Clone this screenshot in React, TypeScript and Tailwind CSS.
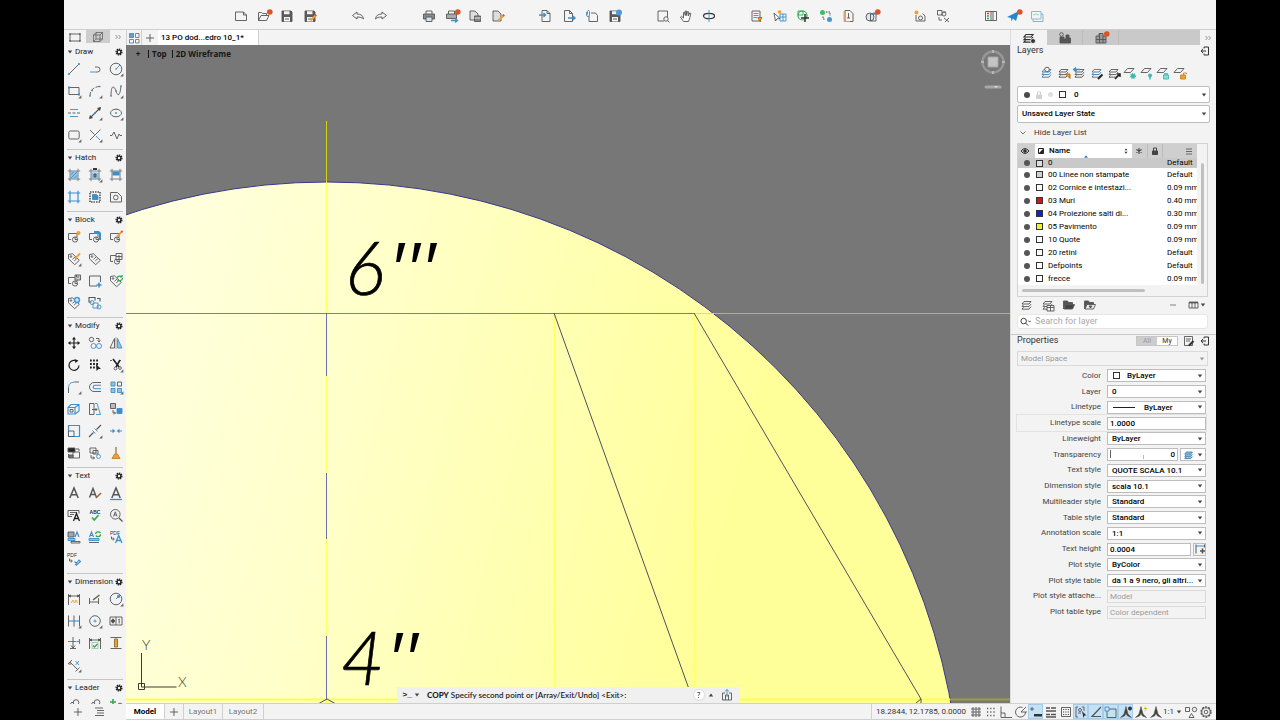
import type { ReactNode } from "react";
import clsx from "clsx";

const BLUE = "#3d8fc9";
const LIGHT = "#8fc4e6";
const GREEN = "#2fa84f";
const ORANGE = "#f0a030";

type Tool = { label: string; icon: ReactNode; flyout?: boolean; alert?: boolean; on?: boolean };

const Glyph = ({ children, flyout, alert }: { children: ReactNode; flyout?: boolean; alert?: boolean }) => (
  <svg viewBox="0 0 14 14" className="h-3.5 w-3.5 shrink-0 overflow-visible" fill="none" stroke="#555" strokeWidth="0.9">
    {children}
    {flyout && <path d="M14.4 11.2v3.2h-3.2z" fill="#666" stroke="none" />}
    {alert && <circle cx="12.8" cy="3" r="2.8" fill="#dc5326" stroke="none" />}
  </svg>
);

/* Shared shapes */
const page = <path d="M3 1.5h5l3 3v8H3zM8 1.5v3h3" />;
const pageWide = <path d="M1.5 3h8l3 3v5.5h-11zM9.5 3v3h3" />;
const block = (
  <>
    <path d="M4 9.5H1.5v-6H10v4" />
    <circle cx="8" cy="9.5" r="2.6" />
    <path d="M8 7v2.5h2.6" />
  </>
);
const tag = (
  <>
    <path d="M1.5 2.5l4-.7 6.8 6.5-4.6 4.4L1.5 6.8z" />
    <circle cx="4" cy="4.5" r=".8" />
    <path d="M5.5 7.3L8 5M7.2 9l2.6-2.4" />
  </>
);
const hatchFrame = <path d="M3 .8v12.4M11 .8v12.4M.8 3h12.4M.8 11h12.4" stroke="#6b7780" />;
const floppy = (
  <>
    <path d="M2 2h9l1 1v9.500H2z" fill="#5a5a5a" />
    <path d="M4 2.300h5.500v3H4zM4 8h6v4.500H4z" fill="#f3f3f3" stroke="none" />
    <path d="M5 10h4" />
  </>
);
const pencil = (
  <>
    <path d="M7.500 11.500L12.500 6.500" stroke={ORANGE} strokeWidth="2" />
    <path d="M12 7l1.200-1.200" stroke="#dc5326" strokeWidth="2" />
  </>
);
const stack = <path d="M4 3.500h7l-2 2.500H2zM3.500 6.800L2 8.600h7l2-2.500M3.500 9.400L2 11.200h7l2-2.500" />;
const flat = <path d="M4.500 2.500H11L7.500 6.500H1z" />;
const letterA = <path d="M2.800 12L7 2l4.200 10M4.300 8.700h5.400" strokeWidth="1.500" />;
const smallA = <path d="M6.500 13l3.200-7.500 3.200 7.500M7.600 10.500H12" stroke={BLUE} strokeWidth="1.300" />;
const dimEnds = <path d="M1.500 2v11M12.500 2v11M1.500 4h11M1.500 4l2-1v2zM12.500 4l-2-1v2z" />;
const annotate = (
  <path d="M7 1.500l2 7.500 3.500 3.500L8.500 11 7 8.500 5.500 11l-4 1.500L5 9z" fill="#3f3f3f" strokeWidth=".6" />
);

const draw: Tool[] = [
  { label: "Line", icon: <><path d="M2 12L12 2" /><circle cx="2" cy="12" r=".7" fill={BLUE} stroke={BLUE} /><circle cx="12" cy="2" r=".7" fill={BLUE} stroke={BLUE} /></> },
  { label: "Polyline", icon: <><path d="M2 10h6" stroke={BLUE} /><path d="M8 10h1.500a2.500 2.500 0 0 0 0-5H7" /></> },
  { label: "Circle", flyout: true, icon: <><circle cx="7" cy="7" r="5.800" /><path d="M7 7l4-4M6 7h2" stroke={BLUE} /></> },
  { label: "Rectangle", flyout: true, icon: <><path d="M2 3.500h10v7H2z" /><path d="M1 3.500h2M11 10.500h2" stroke={BLUE} strokeWidth="2" /></> },
  { label: "Arc", flyout: true, icon: <><path d="M2 12C2 6 6 2.500 12 2.500" strokeDasharray="4 1.500" /><path d="M1.300 12h1.500M3.500 6.500h1.500M11 2.500h1.500" stroke={BLUE} strokeWidth="1.500" /></> },
  { label: "Spline", flyout: true, icon: <><path d="M2 12C2 1 5 1 7 7s4 5 5-5" /><path d="M1.300 12h1.500M6.300 7h1.500M11.300 2h1.500" stroke={BLUE} strokeWidth="1.500" /></> },
  { label: "Construction line", icon: <><path d="M3 3.500h8M3 10.500h8" stroke={BLUE} /><path d="M1 7h3M5.500 7h3M10 7h3" /></> },
  { label: "Ray", flyout: true, icon: <><path d="M2 12L12 2" strokeWidth="1.100" /><path d="M1 13l1-4 3 3zM13 1l-4 1 3 3z" fill="#444" stroke="none" /><path d="M6.300 7h1.500" stroke={BLUE} strokeWidth="1.500" /></> },
  { label: "Ellipse", flyout: true, icon: <><ellipse cx="7" cy="7" rx="5.500" ry="3.800" /><path d="M6 7h2M7 6v2M1 7h1M12 7h1M7 3h.8" stroke={BLUE} /></> },
  { label: "Rounded rectangle", flyout: true, icon: <rect x="1.800" y="3" width="10.400" height="8" rx="1.500" /> },
  { label: "Break at point", flyout: true, icon: <><path d="M2 2l4.500 4.500M2 12L12.500 1.500" /><path d="M8 8l4 4" stroke={BLUE} /></> },
  { label: "Break line", icon: <path d="M1 7.500h2l2-3.500 3 7 2-5 1 1.500h2" /> },
];

const hatch: Tool[] = [
  { label: "Hatch", icon: <><path d="M3.500 3.500h7v7h-7z" fill={LIGHT} stroke="none" /><path d="M4 10l6-6M4 6.500L6.500 4M7.500 10L10 7.500" stroke={BLUE} />{hatchFrame}</> },
  { label: "Gradient", flyout: true, icon: <><path d="M3.500 4.500h7v6h-7z" fill={LIGHT} stroke="none" /><path d="M6 6h2v3H6z" fill={BLUE} />{hatchFrame}<path d="M5 1h4" strokeWidth="1.800" stroke="#222" /></> },
  { label: "Hatch pattern", icon: <><path d="M3.500 3.500h7v4h-7z" fill={BLUE} stroke="none" />{hatchFrame}</> },
  { label: "Boundary", icon: <path d="M3 .8v12.4M11 .8v12.4M.8 3h12.4M.8 11h12.4" stroke={BLUE} strokeWidth="1.200" /> },
  { label: "Edit hatch", icon: <><path d="M2 2h10v10H2z" strokeDasharray="1.500 1" strokeWidth="1.600" /><path d="M4.500 4.500h4l1.500 1.500v3.500H4.500z" fill={BLUE} stroke={BLUE} /></> },
  { label: "Region", icon: <><path d="M1.500 2.500h7l4 4v5.500h-11z" /><circle cx="6.800" cy="7.500" r="2.300" /></> },
];

const blocks: Tool[] = [
  { label: "Create block", icon: <>{block}<circle cx="11.500" cy="3" r="2" fill={ORANGE} stroke="none" /></> },
  { label: "Insert block", icon: <>{block}<path d="M6 1h5l2 2v7h-2V4H6z" fill={BLUE} stroke="none" /></> },
  { label: "Edit block", icon: <>{block}<path d="M8 6.500l5-5" stroke={ORANGE} strokeWidth="1.800" /><path d="M12.300 2.200l1.200-1.200" stroke="#dc5326" strokeWidth="1.800" /></> },
  { label: "Edit attribute", flyout: true, icon: <>{tag}<path d="M8 6.500l5-5" stroke={ORANGE} strokeWidth="1.800" /></> },
  { label: "Define attribute", icon: tag },
  { label: "Block manager", icon: <>{block}<path d="M7 1.500h6v6H7zM7 4.500h6M10 3v4" fill="#f3f3f3" /></> },
  { label: "Write block", icon: <>{block}<path d="M8 1h5.500v5H8zM9.500 1v2h2.500" fill="#ccc" /></> },
  { label: "Set base point", icon: <><path d="M9 12H1.500V2h11v6" /><path d="M11 8.500v5M8.500 11h5" stroke={BLUE} strokeWidth="1.600" /></> },
  { label: "Synchronize attributes", icon: <>{tag}<path d="M8 4a3 3 0 0 1 5-1M13.500 4a3 3 0 0 1-5 2M13 1v2h-2" stroke={GREEN} strokeWidth="1.200" /></> },
  { label: "Move attribute", icon: <>{tag}<circle cx="10" cy="4" r="3.200" fill="#4b9bd5" stroke="none" /><path d="M10 2v4M8 4h4" stroke="#fff" /></> },
  { label: "Replace block", icon: <><path d="M3.500 6H1V1.500h6v3M9 2.500h3v3" strokeWidth="1.100" /><path d="M5 7h5v5H5z" stroke={BLUE} /><circle cx="11" cy="11" r="2" stroke={BLUE} /><circle cx="4" cy="6.500" r="2" stroke={BLUE} /></> },
];

const modify: Tool[] = [
  { label: "Move", icon: <><path d="M7 2v10M2 7h10" stroke="#222" strokeWidth="1.200" /><path d="M7 .8L9 3.500H5zM7 13.200L5 10.500h4zM.8 7l2.700-2v4zM13.200 7l-2.700 2V5z" fill="#222" stroke="none" /></> },
  { label: "Copy", icon: <><circle cx="3.500" cy="3.500" r="2.200" /><path d="M8 2.500h3v3M9.500 4.500l1.500 1.500 1.500-1.500" /><circle cx="5.500" cy="10" r="2.500" stroke={BLUE} /><circle cx="11" cy="10" r="2.500" stroke={BLUE} /></> },
  { label: "Mirror", icon: <><path d="M5.500 2.500v9.500H1z" /><path d="M8.500 2.500V12H13z" stroke={BLUE} fill={LIGHT} /><path d="M7 1v12" strokeWidth=".5" /></> },
  { label: "Rotate", icon: <><path d="M9.500 3A5 5 0 1 0 12 7.500" stroke="#222" strokeWidth="1.200" /><path d="M7.500 1l4 1.500-3 2.500z" fill="#222" stroke="none" /></> },
  { label: "Stretch", icon: <><path d="M2 2.500h9M2 6h9M2 9.500h5" strokeWidth="1.800" strokeDasharray="1.800 1.300" stroke="#222" /><path d="M8 6l5 5H10.500L8.500 13z" fill="#222" stroke="none" /></> },
  { label: "Trim", flyout: true, icon: <><path d="M1 2.500h4.500M10 2.500h3" strokeDasharray="2 1" /><path d="M4 1l6 8M11 2L7 9" strokeWidth="1.600" stroke="#222" /><circle cx="6.500" cy="10.500" r="1.400" /><circle cx="11" cy="10" r="1.400" /></> },
  { label: "Fillet", flyout: true, icon: <><path d="M1.500 13V8" /><path d="M1.500 8c0-4 2-5.500 6-6" stroke={BLUE} /><path d="M7.500 2H12" /></> },
  { label: "Offset", icon: <><path d="M13 2.500H6a4.500 4.500 0 0 0 0 9h7" /><path d="M13 5.200H7a1.800 1.800 0 0 0 0 3.600h6" stroke={BLUE} strokeWidth="1.100" /></> },
  { label: "Array", flyout: true, icon: <><path d="M2 2h4v4H2zM2 8.500h4v4H2zM8.500 8.500h4v4h-4z" fill={LIGHT} stroke={BLUE} /><path d="M8.500 2h4v4h-4z" /></> },
  { label: "3D copy", icon: <><path d="M1 5.500h7V12H1zM1 5.500L4 2.500h8V9L8 12M8 5.500l4-3" stroke={BLUE} strokeWidth="1.100" /><path d="M3 7.500h3V10H3z" /></> },
  { label: "Lengthen", icon: <><path d="M1.500 1.500H6v11H1.500zM4 7.500h5M7.500 6L9 7.500 7.500 9" /><path d="M7 1.500h2l3.500 11H8" stroke={BLUE} /></> },
  { label: "Paste as block", icon: <><path d="M1.500 1.500h5v5h-5z" fill="#bbb" /><path d="M4 8v3h2.500M5 9.500L6.500 11 5 12.500" /><path d="M8 6.500h5v5H8z" fill={BLUE} stroke={BLUE} /></> },
  { label: "Scale", icon: <><path d="M1.500 1.500h11v11h-11z" stroke={BLUE} strokeWidth="1.200" /><path d="M1.500 7h5.500v5.500H1.500z" fill="#f3f3f3" /></> },
  { label: "Break", flyout: true, icon: <><path d="M1 13l4.500-4.500M8.500 5.500L13 1" strokeWidth="1.100" /><path d="M4.500 6.500l3 3M6.500 4.500l3 3" stroke={BLUE} /></> },
  { label: "Join", icon: <><path d="M1 7h4M9 7h4" stroke={BLUE} strokeWidth="1.200" /><path d="M3.500 4.800L6.300 7 3.500 9.200zM10.500 4.800L7.700 7l2.800 2.200z" fill={BLUE} stroke="none" /></> },
  { label: "Draw order", icon: <><path d="M1 2h7v4H1z" fill="#222" /><path d="M6 6h6.500v6H6zM1.500 8v3.500H5M9 3h3v2" /><path d="M2 9h4v3H2z" fill="#777" /></> },
  { label: "Change space", icon: <><path d="M2 2h6v5H2zM5 4.500h5V8H5zM3 9v3h3.500M5 10.500L6.500 12 5 13.500" /><circle cx="10.500" cy="10.500" r="2" stroke={BLUE} /></> },
  { label: "Purge", icon: <><path d="M7 1v7" stroke="#8a5a20" strokeWidth="1.100" /><path d="M5.500 8h3l2.500 4.500H3z" fill={ORANGE} stroke="#c78220" /></> },
];

const textTools: Tool[] = [
  { label: "Multiline text", icon: letterA },
  { label: "Edit text", icon: <><path d="M1.500 11.500L5 2.500l3.500 9M2.800 8.500h4.500" strokeWidth="1.400" /><path d="M8 12l5-5" stroke="#8a6a30" strokeWidth="1.400" /></> },
  { label: "Text style", icon: <>{letterA}<path d="M1 13.500h12" stroke={BLUE} strokeWidth="1.300" /></> },
  { label: "Text to front", icon: <><path d="M1 2.500h11v3M1 2.500v6h4M3 4.500h7M3 6.500h4" /><path d="M6.500 13l3-7.500 3 7.500M7.700 10.500h3.700" strokeWidth="1.300" stroke="#222" /></> },
  { label: "Spelling", icon: <><text x="7" y="5.500" textAnchor="middle" fontSize="5" fill="#333" stroke="none" fontFamily="Liberation Sans" fontWeight="700">ABC</text><path d="M4 9.500l2.300 2.500L10.500 7" stroke={GREEN} strokeWidth="1.600" /></> },
  { label: "Find text", icon: <><circle cx="6.300" cy="6.300" r="4.800" /><path d="M10 10l3.500 3.500" strokeWidth="1.300" /><path d="M4.500 8.500l1.800-4.700 1.800 4.700M5 7h2.500" /></> },
  { label: "Align text", icon: <><path d="M1 2h6v5H1z" fill="#9ab" /><path d="M8 7l2-5 2 5" stroke={BLUE} strokeWidth="1.200" /><path d="M1 8.500h7v2H1z" stroke={BLUE} fill={LIGHT} /><path d="M4 11.500h9v1.500H4z" /></> },
  { label: "Update text", icon: <><path d="M1.500 7l2-5 2 5M2.300 5.500h2.500" stroke={BLUE} strokeWidth="1.200" /><path d="M7.500 4a2.800 2.800 0 0 1 5-1M12.800 4.500a2.800 2.800 0 0 1-5 1" stroke={GREEN} strokeWidth="1.300" /><path d="M1 8.500h10v2H1z" stroke={BLUE} fill={LIGHT} /><path d="M1 12.500h10" /></> },
  { label: "PDF text", icon: <><text x="6" y="4.500" textAnchor="middle" fontSize="5" fill="#333" stroke="none" fontFamily="Liberation Sans">PDF</text><path d="M2.500 6.500V9h2.500M4 7.500L5.300 9 4 10.500" />{smallA}</> },
  { label: "PDF import", icon: <><text x="5" y="4.500" textAnchor="middle" fontSize="5" fill="#333" stroke="none" fontFamily="Liberation Sans">PDF</text><path d="M2.500 6.500V9h2.500M4 7.500L5.300 9 4 10.500" /><path d="M8 13l4-5 1.500 1.500L9 13.500M7.500 9.500l2 2" stroke={BLUE} strokeWidth="1.100" /></> },
];

const dimension: Tool[] = [
  { label: "Dimension", icon: <>{dimEnds}<path d="M4 11l2-3 1.500 3L9 8l1.500 3" stroke={ORANGE} /></> },
  { label: "Quick dimension", icon: <><path d="M1.500 6v6M10.500 6v6M1.500 10h9" /><path d="M5 8l6.500-5" stroke="#6d5a30" strokeWidth="1.400" /></> },
  { label: "Radius", flyout: true, icon: <><circle cx="7" cy="7" r="5.800" /><path d="M7 7l3.500-3.500M10.800 3.200L8 4l2 2z" stroke={BLUE} fill={BLUE} /></> },
  { label: "Continue", flyout: true, icon: <><path d="M1.500 1.500v11M7 1.500v11M12.500 1.500v11" /><path d="M1.500 7h11" stroke={BLUE} strokeWidth="1.100" /></> },
  { label: "Center mark", flyout: true, icon: <><circle cx="7" cy="7" r="5.300" /><path d="M5.500 7h3M7 5.500v3" stroke={BLUE} /></> },
  { label: "Tolerance", icon: <><path d="M1 3h12v8H1zM7 3v8" /><circle cx="4" cy="7" r="1.500" fill="#333" /><path d="M2 7h4M4 4.500v5M10.200 5v4.500M9.300 5.800l1-.8" /></> },
  { label: "Dimension space", icon: <><path d="M1 5.500h8M12.500 3v5M9.500 5.500h3" stroke={BLUE} strokeWidth="1.100" /><path d="M6 1v11M4 9.500l2 2.500 2-2.500M3 12.500h6" /></> },
  { label: "Inspect", icon: <>{dimEnds}<path d="M4 6.500h6v6H4z" stroke="#9cc9a8" /><path d="M5 9.500l1.500 1.500L9.500 8" stroke={GREEN} strokeWidth="1.300" /></> },
  { label: "Dimension update", icon: <><path d="M1.500 1.500h11M1.500 12.500h11" /><path d="M5.500 3h3v8h-3z" fill={ORANGE} stroke="#8a6a30" /></> },
  { label: "Oblique", flyout: true, icon: <><path d="M1 6l4-4M3 4l8 8M8.500 13.500l4-4M1.500 6h3" /><path d="M8.500 3l3.500 4M12 3L8.500 7" stroke={BLUE} /></> },
];

const leader: Tool[] = [
  { label: "Multileader", icon: <><circle cx="9" cy="4.500" r="2.800" /><path d="M1.500 9.500l3-5h2" /></> },
  { label: "Leader edit", icon: <><circle cx="9" cy="4.500" r="2.800" /><path d="M1.500 9.500l3-5h2" /></> },
  { label: "Add leader", icon: <><path d="M4 1v6M1 4h6" stroke={GREEN} strokeWidth="1.600" /><circle cx="11" cy="7.500" r="2.300" /></> },
];

const palettes = [
  { title: "Draw", tools: draw },
  { title: "Hatch", tools: hatch },
  { title: "Block", tools: blocks },
  { title: "Modify", tools: modify },
  { title: "Text", tools: textTools },
  { title: "Dimension", tools: dimension },
  { title: "Leader", tools: leader },
];

const printer = (
  <>
    <path d="M4 5V2h6v3" />
    <path d="M1.500 5h11v5h-11z" fill="#8a8a8a" />
    <path d="M4 8h6v4.500H4z" fill="#cfe3f2" />
  </>
);

const toolbar: Tool[][] = [
  [
    { label: "New", icon: pageWide },
    { label: "Open", alert: true, icon: <path d="M1.500 11.500V3.500h3l1 1h4v2M1.500 11.500l2.500-5h8l-2.500 5z" /> },
    { label: "Save", icon: floppy },
    { label: "Save as", icon: <>{floppy}{pencil}</> },
  ],
  [
    { label: "Undo", icon: <path d="M1.500 6.500L6 3v2c4 0 6 1.500 6.500 5C11 8.500 9 8 6 8v2z" /> },
    { label: "Redo", icon: <path d="M12.500 6.500L8 3v2c-4 0-6 1.500-6.500 5C3 8.500 5 8 8 8v2z" /> },
  ],
  [
    { label: "Print", icon: printer },
    { label: "Publish", alert: true, icon: <><path d="M3.500 5V2h6v3" /><path d="M1.500 5h10v4.500h-10z" fill="#aaa" /><path d="M6 11.500h6M10 9.500l2.500 2-2.500 2" stroke={BLUE} strokeWidth="1.300" /></> },
    { label: "Page setup", icon: <><path d="M2 2h5l3 3v6H2z" fill="#ddd" /><path d="M6.500 7h6v5.500h-6z" fill="#888" /><path d="M6.500 9h6" stroke="#eee" /></> },
    { label: "Edit page", icon: <><path d="M2 2h5l3 3v7H2z" fill="#ddd" />{pencil}</> },
  ],
  [
    { label: "Import", icon: <>{page}<path d="M0 6h6M4.500 4l2 2-2 2" stroke={BLUE} strokeWidth="1.400" /></> },
    { label: "Export", icon: <><path d="M2.500 1.500h5l3 3v8h-8zM7.500 1.500v3h3" /><path d="M6 9h7M11 7l2 2-2 2" stroke={BLUE} strokeWidth="1.400" /></> },
    { label: "Attach", icon: <><path d="M4 7v5.500h8.500V6.500L10.500 4H6" /><path d="M1.500 3v3a1.500 1.500 0 0 0 3 0V2.500a1 1 0 0 0-2 0v3" stroke={BLUE} /></> },
    { label: "Save to web", icon: <>{floppy}<circle cx="11" cy="3.500" r="3" fill="#4b9be0" stroke="none" /></> },
  ],
  [
    { label: "Zoom window", icon: <><path d="M8 12H2V2h9.500v6" /><circle cx="10" cy="10" r="2.200" /><path d="M11.500 11.500l2 2" /></> },
    { label: "Pan", icon: <path d="M4.500 12.500L1.500 8l1-.8L4.500 9V3.500l1-.3.8 3.300V2h1.200v4.500L8.500 2.500l1 .2-.3 4.300 1.600-3 1 .3-1 4.500-1.300 3.700z" fill="#fff" /> },
    { label: "Orbit", icon: <><ellipse cx="7" cy="7" rx="5.500" ry="2.700" stroke="#333" strokeWidth="1.200" /><path d="M7 1v12" stroke={BLUE} /></> },
  ],
  [
    { label: "Quick select", icon: <><path d="M2 2h8v10H2z" /><path d="M3.500 4.500h5M3.500 6.500h5M3.500 8.500h4" stroke={BLUE} /><path d="M8 8.500h4L10.500 11v2L9 11z" fill={ORANGE} stroke="#a86a10" /></> },
    { label: "Select similar", icon: <><path d="M7 5h6v7H7zM7 8h6M10 5v7" stroke={BLUE} /><path d="M1 4l6 5.500-3 .3L2.500 12z" fill="#fff" /><path d="M5 1.500h3v3H5z" fill={ORANGE} stroke="none" /></> },
    { label: "Drawing check", icon: <><circle cx="6.500" cy="6.500" r="4.500" stroke={GREEN} strokeWidth="1.200" /><path d="M2 2h5v4H2z" stroke={GREEN} /><path d="M9 5v8M5 9h8" strokeWidth="1.500" stroke="#333" /></> },
    { label: "Match", icon: <><circle cx="3.500" cy="3.500" r="2.500" fill="#3dbb66" stroke="none" /><circle cx="10.500" cy="10.500" r="2.500" fill="#4596cf" stroke="none" /><path d="M7 3h4v4M4 7.500v2.500h2" strokeDasharray="1.500 1" stroke="#333" /></> },
    { label: "Recover", icon: <><path d="M3 1.500h5l3 3v8H3z" /><path d="M2 2v10.500h6" stroke={ORANGE} /><path d="M6.500 4v5M5 9h3" /></> },
    { label: "Compare", alert: true, icon: <><circle cx="5" cy="8" r="4" fill="#d7e6f2" /><path d="M5.500 5H11v7H5.500z" /><path d="M8 4l4 1" stroke={BLUE} strokeWidth="1.400" /></> },
  ],
  [
    { label: "Content palette", icon: <><path d="M3 6v6h9V7L9.500 4.500" /><circle cx="7.500" cy="9" r="2" /><circle cx="3.500" cy="3.500" r="2" fill={ORANGE} stroke="none" /></> },
    { label: "Reference manager", icon: <><path d="M1.500 1.500H6V6H1.500zM7 3h3M3 8v3h3" /><circle cx="8" cy="5" r="2" /><path d="M8 9l5 4M13 9l-4 4" /></> },
  ],
  [
    { label: "Customize", icon: <><path d="M1.500 2.500h11v9h-11zM7 2.500v9M9 2.500v9" /><path d="M3 4.500h2" stroke="#d33" strokeWidth="1.500" /><path d="M3 7h2M3 9.500h2" stroke={GREEN} strokeWidth="1.500" /></> },
    { label: "Share", alert: true, icon: <path d="M0 8L12 2 9 12 6 9.500 4.500 12.500 4 9z" fill="#2486d0" stroke="none" /> },
    { label: "Shared views", icon: <><path d="M3 10v2.500h10V5h-2" stroke="#8ab" /><path d="M1.500 2.500h9.500V10H1.500z" stroke="#7bb6dc" /><path d="M3 6l3-1 3 1" stroke="#9cc" /></> },
  ],
];

const layerTools: Tool[] = [
  { label: "Layer properties", icon: <g stroke="#3a78a8">{stack}<circle cx="7" cy="3.500" r="2.300" fill="#f3f3f3" stroke="#555" /></g> },
  { label: "Layer isolate", icon: <>{stack}<path d="M8.500 8h4.500v4.500z" fill={ORANGE} stroke="#a86a10" /></> },
  { label: "Layer previous", icon: <>{stack}<path d="M1 3.500h6M3 1.500l-2.200 2L3 5.500" stroke={BLUE} strokeWidth="1.500" /></> },
  { label: "Make current", icon: <><g stroke="#3a78a8">{stack}</g><path d="M8 13l4.500-4.500" strokeWidth="1.800" stroke="#222" /></> },
  { label: "Match layer", icon: <>{stack}<path d="M8 13l4.500-4.500M10 8h3v3" strokeWidth="1.500" stroke="#222" /></> },
  { label: "Freeze", icon: <>{flat}<circle cx="10" cy="10" r="2.300" fill="#45b8ae" stroke="#45b8ae" strokeDasharray="1 .8" strokeWidth="1.500" /></> },
  { label: "Off", icon: <>{flat}<circle cx="10" cy="9.500" r="2" fill="#45b8ae" stroke="none" /><path d="M10 11v2.500" stroke="#45b8ae" strokeWidth="1.500" /></> },
  { label: "Lock", icon: <>{flat}<path d="M7.500 9h5v4h-5zM8.500 9V7.500h3V9" fill="#8fdcd4" stroke="#45b8ae" /></> },
  { label: "Unlock", icon: <>{flat}<path d="M7.500 9h5v4h-5z" fill={ORANGE} stroke="#c78220" /><path d="M10.500 9V7h3v1" stroke="#c78220" /></> },
];

const statusTools: Tool[] = [
  { label: "Grid", icon: <path d="M4 2v10M7 2v10M10 2v10M2 4h10M2 7h10M2 10h10" /> },
  { label: "Snap", icon: <path d="M3 3.500h9M3 7h9M3 10.500h9" strokeDasharray="1.200 2" strokeWidth="1.300" /> },
  { label: "Ortho", icon: <path d="M2 1.500v11h11M2 8h4v4.500" /> },
  { label: "Polar", icon: <><path d="M11.500 7a5 5 0 1 1-3-4.500M7 7h6" /><path d="M7 7l5-5" /></> },
  { label: "Dynamic input", on: true, icon: <><path d="M1 4h4M3 2v4" /><path d="M5 9h8v2.500H5z" fill="#333" stroke="none" /></> },
  { label: "Lineweight", icon: <path d="M2 3h4M7 3h5M2 6h10M2 9.500h4M7 9.500h5M2 12h10" strokeWidth="1.300" /> },
  { label: "Transparency", icon: <><path d="M2.500 2.500h9v9h-9z" /><path d="M4 4.500h7M4 7h7M4 9.500h7" strokeDasharray="1.200 1.200" strokeWidth="1.200" /></> },
  { label: "Selection cycling", on: true, icon: <><path d="M4 2H2v10h2M8 2h2v4" /><circle cx="6" cy="5" r="1.500" /><path d="M4 8h3" /><path d="M8 6l4.500 4.500h-2L9.500 13z" fill="#333" stroke="none" /></> },
  { label: "Object tracking", on: true, icon: <path d="M12 2L3 11.500h9" strokeWidth="1.200" /> },
  { label: "Object snap", on: true, icon: <><path d="M3 4h9v8.500H3z" /><path d="M1 2h4v4H1z" stroke={BLUE} fill="#cfe6f8" /></> },
  { label: "Annotation visibility", on: true, icon: <>{annotate}<circle cx="11" cy="3.500" r="2" fill="#333" stroke="none" /></> },
  { label: "Auto scale", icon: <>{annotate}<path d="M12 1l-2.500 3h2L10 7l3.500-4h-2z" fill={ORANGE} stroke="none" /></> },
  { label: "Annotation scale", icon: annotate },
];

const layers = [
  { name: "0", weight: "Default", swatch: "bg-[#dedede]" },
  { name: "00 Linee non stampate", weight: "Default", swatch: "bg-[#cfcfcf]" },
  { name: "02 Cornice e intestazi...", weight: "0.09 mm", swatch: "bg-white" },
  { name: "03 Muri", weight: "0.40 mm", swatch: "bg-[#df1111]" },
  { name: "04 Proiezione salti di...", weight: "0.30 mm", swatch: "bg-[#0d24d6]" },
  { name: "05 Pavimento", weight: "0.09 mm", swatch: "bg-[#e9f32b]" },
  { name: "10 Quote", weight: "0.09 mm", swatch: "bg-white" },
  { name: "20 retini", weight: "Default", swatch: "bg-white" },
  { name: "Defpoints", weight: "Default", swatch: "bg-white" },
  { name: "frecce", weight: "0.09 mm", swatch: "bg-white" },
];

type Property = { label: string; value: string; kind?: "swatch" | "line" | "input" | "transparency" | "height" | "disabled" };

const properties: Property[] = [
  { label: "Color", value: "ByLayer", kind: "swatch" },
  { label: "Layer", value: "0" },
  { label: "Linetype", value: "ByLayer", kind: "line" },
  { label: "Linetype scale", value: "1.0000", kind: "input" },
  { label: "Lineweight", value: "ByLayer" },
  { label: "Transparency", value: "0", kind: "transparency" },
  { label: "Text style", value: "QUOTE SCALA 10.1" },
  { label: "Dimension style", value: "scala 10.1" },
  { label: "Multileader style", value: "Standard" },
  { label: "Table style", value: "Standard" },
  { label: "Annotation scale", value: "1:1" },
  { label: "Text height", value: "0.0004", kind: "height" },
  { label: "Plot style", value: "ByColor" },
  { label: "Plot style table", value: "da 1 a 9 nero, gli altri..." },
  { label: "Plot style attache...", value: "Model", kind: "disabled" },
  { label: "Plot table type", value: "Color dependent", kind: "disabled" },
];

const ToolButton = ({ tool, className }: { tool: Tool; className?: string }) => (
  <button type="button" aria-label={tool.label} className={clsx("flex items-center justify-center", className)}>
    <Glyph flyout={tool.flyout} alert={tool.alert}>{tool.icon}</Glyph>
  </button>
);

const Caret = ({ className }: { className?: string }) => (
  <svg viewBox="0 0 6 4" className={clsx("h-1 w-1.5 shrink-0", className)}><path d="M.8.500h4.400L3 3.500z" fill="#444" /></svg>
);

const Gear = () => (
  <svg viewBox="0 0 8 8" className="h-2 w-2" fill="none" stroke="#222">
    <circle cx="4" cy="4" r="2.900" strokeWidth="1.300" strokeDasharray="1.400 .8" />
    <circle cx="4" cy="4" r="1.900" strokeWidth="1.400" />
  </svg>
);

const Chevrons = () => (
  <svg viewBox="0 0 6 6" className="h-1.5 w-1.5" fill="none" stroke="#777" strokeWidth=".8"><path d="M.5 1l2 2-2 2M3.500 1l2 2-2 2" /></svg>
);

const DockIcon = () => (
  <svg viewBox="0 0 10 10" className="h-2.5 w-2.5" fill="none" stroke="#333"><path d="M4 2.500V1h4.500v8H4V7.500M1 5h5M3 3L1 5l2 2" /></svg>
);

const TopToolbar = () => (
  <header className="flex h-[30px] items-center gap-[25px] border-b border-[#cfcfcf] bg-[#f4f4f4] pl-[165px] pt-0.5">
    {toolbar.map((group, i) => (
      <div key={i} className="flex">
        {group.map((tool) => <ToolButton key={tool.label} tool={tool} className="h-5 w-[23px]" />)}
      </div>
    ))}
  </header>
);

const ToolPalette = () => (
  <aside className="flex w-[62px] shrink-0 flex-col bg-[#f3f3f3]">
    <div className="flex h-[13px] shrink-0">
      <button type="button" aria-label="2D drafting" className="flex w-[22px] items-center justify-center">
        <Glyph><path d="M2 4h10v7H2z" /><path d="M1.300 4h1.500M11.200 4h1.500M1.300 11h1.500M11.200 11h1.500" strokeWidth="1.500" /></Glyph>
      </button>
      <button type="button" aria-label="3D modeling" className="flex w-6 items-center justify-center bg-[#cdcdcd]">
        <Glyph><path d="M2.500 5h6.500v6.500H2.500zM2.500 5l2.500-2.500h6.500V9L9 11.500M9 5l2.500-2.500M5 2.500V9h6.500M5 9l-2.500 2.500" strokeWidth=".7" /></Glyph>
      </button>
      <button type="button" aria-label="More tool sets" className="flex w-4 items-center justify-center"><Chevrons /></button>
    </div>
    <div className="min-h-0 flex-1 basis-0 overflow-hidden">
      {palettes.map((palette, i) => (
        <section key={palette.title} className="pb-[3px]">
          <h2 className={clsx("mx-[3px] flex h-[15px] items-center border-t pt-px text-[8px] text-[#222]", i === 0 ? "border-transparent" : "border-[#c4c4c4]")}>
            <Caret />
            <span className="ml-0.5 flex-1">{palette.title}</span>
            <Gear />
          </h2>
          <div className="grid grid-cols-3">
            {palette.tools.map((tool) => <ToolButton key={tool.label} tool={tool} className="h-[22px]" />)}
          </div>
        </section>
      ))}
    </div>
    <div className="flex h-4 shrink-0 items-center gap-2 pl-[7px]">
      <button type="button" aria-label="Add tool group"><Glyph><path d="M7 3v8M3 7h8" /></Glyph></button>
      <button type="button" aria-label="Tool group list"><Glyph><path d="M2 3h8M4 5.500h7M4 8h7M2 10.500h9" /></Glyph></button>
    </div>
  </aside>
);

const DocumentTabs = () => (
  <nav className="flex h-[15px] shrink-0 bg-[#f3f3f3]">
    <button type="button" aria-label="Start" className="flex w-4 items-center justify-center border-x border-[#d0d0d0]">
      <Glyph><path d="M2.500 2.500h4v4h-4z" fill="#5ba3d6" stroke={BLUE} /><path d="M8.500 2.500h3.500v4H8.500zM2.500 8.500h4V12h-4zM8.500 8.500h3.500V12H8.500z" stroke="#5c7f98" /></Glyph>
    </button>
    <button type="button" aria-label="New drawing" className="flex w-4 items-center justify-center">
      <Glyph><path d="M7 3v8M3 7h8" /></Glyph>
    </button>
    <a href="#drawing" className="flex w-[101px] items-center border-r border-[#d0d0d0] bg-white pl-[3px] text-[8px] font-medium text-black">13 PO dod...edro 10_1*</a>
  </nav>
);

const Drawing = () => (
  <svg viewBox="126 45 884 658" preserveAspectRatio="xMinYMin slice" className="absolute inset-0 h-full w-full" fill="none">
    <defs>
      <linearGradient id="floor" gradientUnits="userSpaceOnUse" x1="126" y1="280" x2="760" y2="440">
        <stop offset="0" stopColor="#ffffe0" />
        <stop offset=".35" stopColor="#ffffcb" />
        <stop offset="1" stopColor="#ffff99" />
      </linearGradient>
    </defs>
    <circle cx="327" cy="816" r="634" fill="url(#floor)" stroke="#39398c" strokeWidth="1" />

    {/* Construction lines */}
    <path d="M326.500 121v61" stroke="#d2d20c" />
    <path d="M326.500 182v521" stroke="#ffff66" />
    <path d="M554.500 313v390M694.500 313v390" stroke="#ffff66" />
    <path d="M694 313.500h20" stroke="#e6e640" />
    <path d="M714 313.500h296" stroke="#bcbc28" />
    <path d="M126 699.500h824" stroke="#ffff4d" strokeWidth="2" />
    <path d="M950 699.500h60" stroke="#9d9d3e" strokeWidth="2" />

    {/* Walls and section lines */}
    <path d="M126 313.500h568" stroke="#7c7ca6" />
    <path d="M326.500 313v63M326.500 473v66M326.500 636v64" stroke="#7070a8" />
    <path d="M554 313l140 390M694 313l227 386" stroke="#50505c" />
    <path d="M318 704l9-5 9 5M916 703l5-4v5" stroke="#50505c" />

    <g fill="#000" fontFamily="Lato, sans-serif" fontStyle="italic" fontSize="74" fontWeight="300" stroke="#000" strokeWidth=".7">
      <text x="345" y="295">6<tspan x="388" fontFamily="'Open Sans', sans-serif" fontWeight="400" stroke="none">'''</tspan></text>
      <text x="341" y="685">4<tspan x="386" fontFamily="'Open Sans', sans-serif" fontWeight="400" stroke="none">''</tspan></text>
    </g>

    {/* UCS icon */}
    <g stroke="#3c3c30">
      <path d="M141.500 653v34h35M138.500 683.500h6v6h-6z" />
    </g>
    <g fill="#3c3c30" fontFamily="Lato, sans-serif" fontSize="14" fontWeight="300">
      <text x="142" y="650">Y</text>
      <text x="178" y="687">X</text>
    </g>
  </svg>
);

const Viewport = () => (
  <main className="relative min-h-0 flex-1 overflow-hidden bg-[#777777]">
    <Drawing />
    <div className="absolute left-2 top-1 flex items-center gap-[3px] font-['Open_Sans',sans-serif] text-[8px] font-bold leading-[10px] text-[#161616]">
      <button type="button" className="w-2">+</button>
      <span className="ml-[3px] h-2 w-px bg-[#161616]" />
      <button type="button">Top</button>
      <span className="ml-0.5 h-2 w-px bg-[#161616]" />
      <button type="button">2D Wireframe</button>
    </div>
    <svg viewBox="0 0 28 48" className="absolute right-1 top-1 h-12 w-7" fill="none">
      <circle cx="15" cy="13" r="10.500" stroke="#979797" strokeWidth="2.400" />
      <path d="M10 8h10v10H10z" fill="#c4c4c4" stroke="#a5a5a5" />
      <path d="M15 1v3M15 22v3M3 13h3M24 13h3" stroke="#c4c4c4" strokeWidth="1.500" />
      <rect x="6.500" y="36.500" width="17" height="3" rx="1.500" fill="#a8a8a8" />
      <path d="M16 37h4l-2 2z" fill="#ddd" />
    </svg>
    <form className="absolute bottom-0 left-[30.600%] flex h-4 w-[343px] items-center bg-[#f0f0f0] px-1.5 font-[Lato,sans-serif] text-[8px] text-[#222]">
      <span className="font-['Liberation_Mono',monospace] font-bold">&gt;_</span>
      <Caret className="ml-0.5" />
      <label className="ml-[7px] flex-1 font-semibold" htmlFor="command"><b className="font-black">COPY</b> Specify second point or [Array/Exit/Undo] &lt;Exit&gt;:</label>
      <input id="command" className="w-8 bg-transparent outline-none" />
      <button type="button" className="flex h-2.5 w-2.5 items-center justify-center rounded-full bg-white ring-1 ring-[#ddd]">?</button>
      <Caret className="ml-1 rotate-180" />
      <button type="button" aria-label="Share" className="ml-1.5">
        <Glyph><path d="M5 5H2.500v7h9V5H9M5.500 12V7h3v5" /><path d="M7 9V1.500M5 3.500l2-2 2 2" stroke={BLUE} /></Glyph>
      </button>
    </form>
  </main>
);

const Picker = ({ id, label, value, before, pad = "pl-[5px]", disabled, className }: {
  id: string; label?: string; value: string; before?: ReactNode; pad?: string; disabled?: boolean; className?: string;
}) => (
  <div className={clsx("relative flex items-center border", disabled ? "border-[#dadada] bg-[#f3f3f3]" : "border-[#bdbdbd] bg-white", className)}>
    {before}
    <select
      id={id}
      aria-label={label}
      disabled={disabled}
      className={clsx("h-full w-full appearance-none bg-transparent pr-3 opacity-100 outline-none", pad, disabled ? "text-[#9a9a9a]" : "font-medium text-black")}
    >
      <option>{value}</option>
    </select>
    <Caret className={clsx("pointer-events-none absolute right-0.5", disabled && "opacity-50")} />
  </div>
);

const Swatch = ({ className }: { className?: string }) => (
  <span className={clsx("inline-block h-[7px] w-[7px] shrink-0 border border-[#333]", className)} />
);

const LayerTable = () => (
  <div className="mr-0.5 flex h-[154px] flex-col border border-[#d2d2d2] bg-[#f3f3f3]">
    <div className="flex min-h-0 flex-1">
      <div className="min-w-0 flex-1 overflow-hidden">
        <table className="w-full table-fixed border-collapse text-left text-black">
          <thead>
            <tr className="h-3.5 bg-[#cfcfcf]">
              <th className="w-[17px]">
                <svg aria-label="Visible" viewBox="0 0 10 8" className="ml-0.5 h-2 w-2.5" fill="none" stroke="#333"><path d="M1 4q4-5 8 0-4 5-8 0z" /><circle cx="5" cy="4" r="1.300" fill="#333" /></svg>
              </th>
              <th className="relative bg-white font-medium">
                <span className="flex items-center gap-[5px] pl-[3px]">
                  <svg viewBox="0 0 6 6" className="h-1.5 w-1.5"><path d="M.5.500h5v5h-5z" fill="#fff" stroke="#222" /><path d="M5.500.500v5h-5z" fill="#222" /></svg>
                  <span className="flex-1">Name</span>
                  <svg viewBox="0 0 5 8" className="mr-1 h-1.5 w-1"><path d="M.5 3h4l-2-2.500zM.5 5h4l-2 2.500z" fill="#333" /></svg>
                </span>
                <svg viewBox="0 0 6 4" className="absolute bottom-0 left-1/2 h-[3px] w-1"><path d="M0 4h6L3 0z" fill="#2c80c8" /></svg>
              </th>
              <th className="w-[15px] border-r border-[#bbb]">
                <svg aria-label="Frozen" viewBox="0 0 8 8" className="mx-auto h-1.5 w-1.5" stroke="#444" strokeWidth="1.400"><path d="M4 0v8M.5 2l7 4M.5 6l7-4" /></svg>
              </th>
              <th className="w-[15px] border-r border-[#bbb]">
                <svg aria-label="Locked" viewBox="0 0 8 8" className="mx-auto h-2 w-2" fill="none" stroke="#444"><path d="M1.500 4h5v3.500h-5z" fill="#444" /><path d="M2.500 4V1h3v3" /></svg>
              </th>
              <th className="w-[35px]">
                <svg aria-label="Lineweight" viewBox="0 0 8 8" className="ml-[22px] h-2 w-2" stroke="#666"><path d="M1 2h6M1 4.500h6M1 7h6" /></svg>
              </th>
            </tr>
          </thead>
          <tbody>
            {layers.map((layer, i) => (
              <tr key={layer.name} className={i === 0 ? "h-[10px] bg-[#c9c9c9] leading-[8px]" : "h-[13px] bg-white leading-[11px]"}>
                <td><span className="ml-1.5 block h-1.5 w-1.5 rounded-full bg-[#555]" /></td>
                <td>
                  <span className="flex items-center gap-[5px] whitespace-nowrap pl-px"><Swatch className={layer.swatch} />{layer.name}</span>
                </td>
                <td colSpan={2} />
                <td className="overflow-hidden whitespace-nowrap pl-[5px]">{layer.weight}</td>
              </tr>
            ))}
          </tbody>
        </table>
      </div>
      <div className="flex w-2.5 shrink-0 justify-center pt-[19px]"><div className="h-[121px] w-[3px] rounded-full bg-[#c0c0c0]" /></div>
    </div>
    <div className="flex h-[11px] shrink-0 items-center pl-1"><div className="h-[3px] w-2/3 rounded-full bg-[#bfbfbf]" /></div>
  </div>
);

const LayersPanel = () => (
  <section className="px-1.5">
    <div className="flex h-3 items-center justify-between">
      <h2 className="text-[9px] text-[#333]">Layers</h2>
      <button type="button" aria-label="Detach layers"><DockIcon /></button>
    </div>
    <div className="mt-[9px] flex justify-between px-[23px]">
      {layerTools.map((tool) => <ToolButton key={tool.label} tool={tool} className="h-3.5 w-3.5" />)}
    </div>
    <Picker
      id="current-layer"
      label="Current layer"
      value="0"
      pad="pl-2"
      className="mt-[6px] h-[17px] rounded-xs"
      before={
        <span className="flex shrink-0 items-center gap-1.5 pl-1.5">
          <span className="h-1.5 w-1.5 rounded-full bg-[#4a4a4a]" />
          <svg viewBox="0 0 6 8" className="h-2 w-1.5" fill="#d2d2d2" stroke="#d2d2d2"><path d="M.5 4h5v3.500h-5z" /><path d="M1.500 4V1h3v3" fill="none" /></svg>
          <span className="h-[5px] w-[5px] rounded-full bg-[#dedede]" />
          <Swatch className="bg-white" />
        </span>
      }
    />
    <Picker id="layer-state" label="Layer state" value="Unsaved Layer State" pad="pl-1" className="mt-0.5 h-[18px] rounded-xs" />
    <button type="button" className="flex h-5 items-center gap-2 pl-[3px] text-[#333]">
      <svg viewBox="0 0 6 4" className="h-1 w-1.5" fill="none" stroke="#777"><path d="M.5.500L3 3 5.500.500" /></svg>
      Hide Layer List
    </button>
    <LayerTable />
    <div className="flex h-4 items-center gap-[7px] pl-[3px]">
      <button type="button" aria-label="New layer"><Glyph>{stack}</Glyph></button>
      <button type="button" aria-label="Layer states manager"><Glyph>{stack}<path d="M6 7.500h7V13H6z" fill="#f3f3f3" /><path d="M6 9.500h7M9.500 8v5" /></Glyph></button>
      <button type="button" aria-label="New group"><Glyph><path d="M1.500 11V3h4l1 1.500h4V6H4z" fill="#555" /><path d="M4 6.500h8.500l-2 4.500h-8.500z" fill="#444" /></Glyph></button>
      <button type="button" aria-label="New filter"><Glyph><path d="M1.500 11V3h4l1 1.500h4V6H4z" fill="#555" /><path d="M4 6.500h8.500l-2 4.500h-8.500z" fill="#eee" /><path d="M6 8h3l-1.500 2z" fill="#444" /></Glyph></button>
      <button type="button" aria-label="Delete layer" className="ml-auto"><Glyph><path d="M4 7h6" stroke="#777" /></Glyph></button>
      <button type="button" aria-label="Columns" className="mr-1 flex items-center"><Glyph><path d="M2 4.500h9v5.500H2zM5 4.500V10M8 4.500V10" /><path d="M2 4.500h9" strokeWidth="1.800" /></Glyph><Caret className="-ml-px" /></button>
    </div>
    <label className="mr-0.5 mt-px flex h-[15px] items-center rounded-[3px] border border-[#e6e6e6] bg-white pl-0.5">
      <svg viewBox="0 0 12 10" className="h-2.5 w-3" fill="none" stroke="#333"><circle cx="4" cy="4" r="3" /><path d="M6.200 6.200L9 9M9 3.500l1.500 1.500L12 3.500" /></svg>
      <input type="search" placeholder="Search for layer" aria-label="Search for layer" className="ml-1 w-full bg-transparent text-[9px] outline-none placeholder:text-[#a9a9a9]" />
    </label>
  </section>
);

const PropertyField = ({ property, id }: { property: Property; id: string }) => {
  const box = "h-[13px] w-full min-w-0 border border-[#bdbdbd] bg-white font-medium text-black outline-none";
  switch (property.kind) {
    case "swatch":
      return <Picker id={id} value={property.value} className="h-[13px]" pad="pl-[7px]" before={<Swatch className="ml-[5px] bg-white" />} />;
    case "line":
      return <Picker id={id} value={property.value} className="h-[13px]" pad="pl-[9px]" before={<span className="ml-[5px] h-px w-[22px] shrink-0 bg-[#222]" />} />;
    case "input":
      return <input id={id} defaultValue={property.value} className={clsx(box, "px-0.5")} />;
    case "disabled":
      return <input id={id} disabled defaultValue={property.value} className="h-[13px] w-full border border-[#dadada] bg-[#f3f3f3] px-0.5 text-[#9a9a9a]" />;
    case "height":
      return (
        <div className="flex gap-0.5">
          <input id={id} defaultValue={property.value} className={clsx(box, "px-0.5")} />
          <button type="button" aria-label="Pick height" className="flex h-[13px] w-[13px] shrink-0 items-center justify-center border border-[#bdbdbd]">
            <svg viewBox="0 0 12 12" className="h-3 w-3 shrink-0" fill="none" stroke="#555"><path d="M2 1.500v9M10.500 1.500v3" /><path d="M2 3h8.500" stroke={BLUE} /><path d="M8.500 5.500v5M6 8h5" strokeWidth="1.600" /></svg>
          </button>
        </div>
      );
    case "transparency":
      return (
        <div className="flex gap-0.5">
          <div className="relative min-w-0 flex-1">
            <input id={id} defaultValue={property.value} className={clsx(box, "px-0.5 text-right")} />
            <span className="absolute left-[3px] top-0.5 h-2 w-px bg-[#666]" />
            <span className="absolute bottom-0.5 left-1/2 h-1 w-px bg-[#bbb]" />
          </div>
          <button type="button" aria-label="Transparency source" className="flex h-[13px] w-[26px] shrink-0 items-center justify-between border border-[#bdbdbd] bg-white px-0.5">
            <svg viewBox="0 0 14 14" className="h-3 w-3" stroke="#3a78a8" fill={LIGHT}>{stack}</svg>
            <Caret />
          </button>
        </div>
      );
    default:
      return <Picker id={id} value={property.value} className="h-[13px]" pad="pl-1" />;
  }
};

const PropertiesPanel = () => (
  <section className="mt-[5px] border-t border-[#c8c8c8]">
    <div className="px-1.5">
      <div className="flex h-[11px] items-center">
        <h2 className="flex-1 text-[9px] text-[#333]">Properties</h2>
        <div className="mr-1 flex h-2.5 w-[42px] border border-[#c6c6c6] text-[7px] leading-[8px]">
          <button type="button" className="flex-1 bg-[#cdcdcd] text-[#999]">All</button>
          <button type="button" className="flex-1 bg-white text-[#333]">My</button>
        </div>
        <button type="button" aria-label="Customize properties" className="mr-1"><Glyph><path d="M2.500 2.500h8v9h-8zM4 5h5M4 7h4" /><path d="M7 11.500l4.500-4.500" strokeWidth="2.200" stroke="#333" /></Glyph></button>
        <button type="button" aria-label="Detach properties"><DockIcon /></button>
      </div>
      <Picker id="space" label="Selection" value="Model Space" disabled pad="pl-[3px]" className="mr-0.5 mt-[5px] h-[15px]" />
    </div>
    <div className="mt-0.5 grid h-[252px] auto-rows-fr pl-1.5 pr-2.5">
      {properties.map((property) => {
        const id = property.label.toLowerCase().replace(/[^a-z]+/g, "-");
        return (
          <div key={id} className={clsx("grid grid-cols-[84px_minmax(0,1fr)] items-center gap-[6px]", property.kind === "input" && "ring-1 ring-[#e2e2e2]")}>
            <label htmlFor={id} className="truncate text-right text-[#444]">{property.label}</label>
            <PropertyField property={property} id={id} />
          </div>
        );
      })}
    </div>
  </section>
);

const Inspector = () => (
  <aside className="flex w-[206px] shrink-0 flex-col overflow-hidden border-l border-[#dcdcdc] bg-[#f3f3f3] text-[8px]">
    <div className="flex h-[15px] shrink-0 bg-[#c9c9c9]">
      <button type="button" aria-label="Layers" className="flex w-9 items-center justify-center bg-[#f3f3f3]">
        <Glyph><g stroke="#333" strokeWidth="1.200">{stack}</g><circle cx="11" cy="10" r="2.500" fill="#333" stroke="#f3f3f3" /></Glyph>
      </button>
      <button type="button" aria-label="Blocks" className="flex w-9 items-center justify-center border-r border-[#bdbdbd]">
        <Glyph><path d="M2 6h4v2h2V4h3v3h1.500v5H2z" fill="#555" /><circle cx="3.500" cy="3.500" r="1.800" /></Glyph>
      </button>
      <button type="button" aria-label="References" className="flex w-9 items-center justify-center border-r border-[#bdbdbd]">
        <Glyph alert><path d="M2 12V5h3V2.500h4V5h3v7z" fill="#999" /><path d="M2 8.500h10M5.500 3v9M9 5v7" /></Glyph>
      </button>
      <span className="flex-1" />
      <button type="button" aria-label="More palettes" className="flex w-4 items-center justify-center bg-[#f3f3f3]"><Chevrons /></button>
    </div>
    <LayersPanel />
    <PropertiesPanel />
  </aside>
);

const StatusBar = () => (
  <footer className="flex h-[17px] shrink-0 items-stretch border-y border-[#cfcfcf] bg-[#f3f3f3] text-[8px] text-[#777]">
    <a href="#model" className="flex w-[39px] items-center justify-center border-r border-[#d0d0d0] bg-white font-bold text-black">Model</a>
    <button type="button" aria-label="New layout" className="flex w-[19px] items-center justify-center border-r border-[#d0d0d0]"><Glyph><path d="M7 3v8M3 7h8" /></Glyph></button>
    <a href="#layout1" className="flex w-[39px] items-center justify-center border-r border-[#d0d0d0]">Layout1</a>
    <a href="#layout2" className="flex w-[41px] items-center justify-center border-r border-[#d0d0d0]">Layout2</a>
    <output className="ml-auto flex items-center border-l border-[#d0d0d0] pl-1 pr-0.5 text-[#333]">18.2844, 12.1785, 0.0000</output>
    {statusTools.map((tool) => <ToolButton key={tool.label} tool={tool} className={clsx("w-[15px]", tool.on && "border border-[#a9cce6] bg-[#c5e1f6]")} />)}
    <button type="button" className="flex w-5 items-center gap-0.5 text-[#333]">1:1<Caret /></button>
    <ToolButton tool={{ label: "Isolate objects", icon: <><path d="M1.500 2.500h4v4h-4zM5 12.500l2.500-4 2.500 4z" /><circle cx="10.500" cy="4.500" r="2.200" /></> }} className="w-[15px]" />
    <ToolButton tool={{ label: "Settings", icon: <><circle cx="7" cy="7" r="5" strokeWidth="1.300" strokeDasharray="2 1.140" /><circle cx="7" cy="7" r="4.200" /><circle cx="7" cy="7" r="1.800" /></> }} className="mr-[3px] w-[15px]" />
  </footer>
);

export default function App() {
  return (
    <div className="min-h-screen bg-black px-16 font-[Roboto,Inter,sans-serif]">
      <div className="flex h-screen flex-col bg-[#f3f3f3]">
        <TopToolbar />
        <div className="flex min-h-0 flex-1">
          <ToolPalette />
          <div className="flex min-w-0 flex-1 flex-col">
            <div className="flex min-h-0 flex-1">
              <div className="flex min-w-0 flex-1 flex-col">
                <DocumentTabs />
                <Viewport />
              </div>
              <Inspector />
            </div>
            <StatusBar />
          </div>
        </div>
      </div>
    </div>
  );
}
